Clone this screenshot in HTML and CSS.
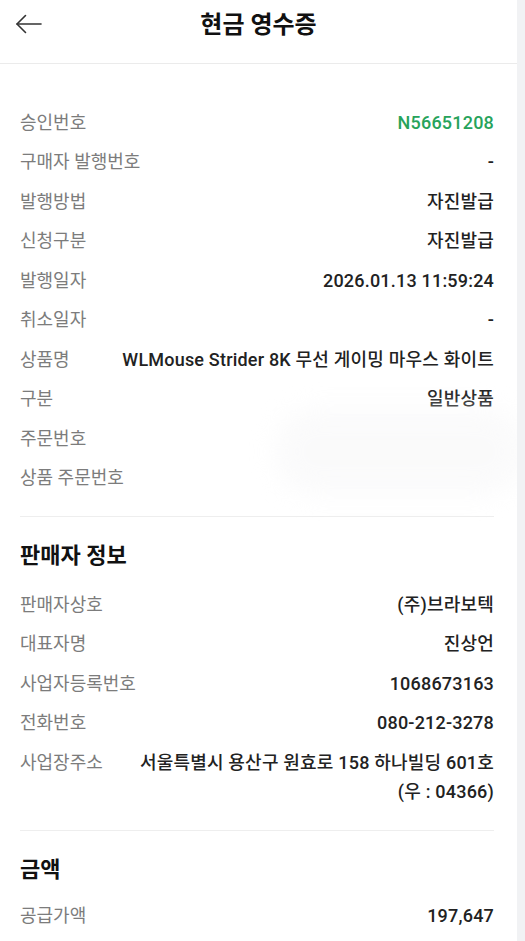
FILE: index.html
```html
<!DOCTYPE html>
<html lang="ko">
<head>
    <meta charset="utf-8">
    <title>현금 영수증</title>
    <link rel="stylesheet" href="styles.css">
</head>
<body>
<div class="page">
    <header class="topbar">
        <button class="back" type="button" aria-label="뒤로">
            <svg width="28" height="22" viewBox="0 0 28 22" fill="none" stroke="#333" stroke-width="1.6" stroke-linecap="round" stroke-linejoin="round">
                <path d="M26 11H2"/>
                <path d="M10.5 2.5L2 11l8.5 8.5"/>
            </svg>
        </button>
        <h1>현금 영수증</h1>
        <span></span>
    </header>

    <section class="block first">
        <dl class="rows">
            <div class="row"><dt>승인번호</dt><dd class="green">N56651208</dd></div>
            <div class="row"><dt>구매자 발행번호</dt><dd>-</dd></div>
            <div class="row"><dt>발행방법</dt><dd>자진발급</dd></div>
            <div class="row"><dt>신청구분</dt><dd>자진발급</dd></div>
            <div class="row"><dt>발행일자</dt><dd>2026.01.13 11:59:24</dd></div>
            <div class="row"><dt>취소일자</dt><dd>-</dd></div>
            <div class="row"><dt>상품명</dt><dd>WLMouse Strider 8K 무선 게이밍 마우스 화이트</dd></div>
            <div class="row"><dt>구분</dt><dd>일반상품</dd></div>
            <div class="row"><dt>주문번호</dt><dd></dd></div>
            <div class="row"><dt>상품 주문번호</dt><dd></dd></div>
        </dl>
        <div class="mask"></div>
    </section>

    <section class="block">
        <h2>판매자 정보</h2>
        <dl class="rows">
            <div class="row"><dt>판매자상호</dt><dd>(주)브라보텍</dd></div>
            <div class="row"><dt>대표자명</dt><dd>진상언</dd></div>
            <div class="row"><dt>사업자등록번호</dt><dd>1068673163</dd></div>
            <div class="row"><dt>전화번호</dt><dd>080-212-3278</dd></div>
            <div class="row"><dt>사업장주소</dt><dd>서울특별시 용산구 원효로 158 하나빌딩 601호<br>(우 : 04366)</dd></div>
        </dl>
    </section>

    <section class="block last">
        <h2>금액</h2>
        <dl class="rows">
            <div class="row"><dt>공급가액</dt><dd>197,647</dd></div>
        </dl>
    </section>
</div>
</body>
</html>
```

FILE: styles.css
```css
body {
    margin: 0;
    background-color: #f1f2f4;
    font-family: Roboto, "Noto Sans CJK KR", sans-serif;
    color: #1e1e1e;
}

.page {
    width: 517px;
    min-height: 941px;
    background-color: #fff;
    overflow: hidden;
}

.topbar {
    height: 63px;
    border-bottom: 1px solid #ebebeb;
    display: grid;
    grid-template-columns: 60px 1fr 60px;
    align-items: center;
}

.back {
    border: 0;
    background: none;
    padding: 0 0 0 15px;
    height: 40px;
    margin-top: -16px;
    display: flex;
    align-items: center;
    cursor: pointer;
}

.topbar h1 {
    margin: -18px 0 0;
    text-align: center;
    font-size: 24px;
    font-weight: 700;
    color: #111;
}

.block {
    margin: 0 23px 0 20px;
    padding: 24px 0;
    border-bottom: 1px solid #eeeeee;
    position: relative;
}

.block.first {
    padding-top: 43.5px;
}

.block.last {
    padding-top: 24.5px;
    border-bottom: 0;
}

.block h2 {
    margin: 0 0 18.5px;
    font-size: 22px;
    line-height: 30px;
    font-weight: 700;
    color: #111;
}

.block.last h2 {
    margin-bottom: 16px;
}

.rows {
    margin: 0;
    display: flex;
    flex-direction: column;
    gap: 10.5px;
}

.row {
    display: flex;
    justify-content: space-between;
    align-items: flex-start;
    gap: 20px;
    font-size: 18px;
    line-height: 29px;
}

.row dt {
    color: #7c7c7c;
    white-space: nowrap;
}

.row dd {
    margin: 0;
    text-align: right;
    font-weight: 500;
    letter-spacing: 0.2px;
    color: #222;
}

.row dd.green {
    color: #27a35b;
}

.mask {
    position: absolute;
    left: 255px;
    right: -30px;
    top: 345px;
    height: 85px;
    background: #f6f6f7;
    border-radius: 40px;
    filter: blur(12px);
    opacity: 0.5;
}
```
